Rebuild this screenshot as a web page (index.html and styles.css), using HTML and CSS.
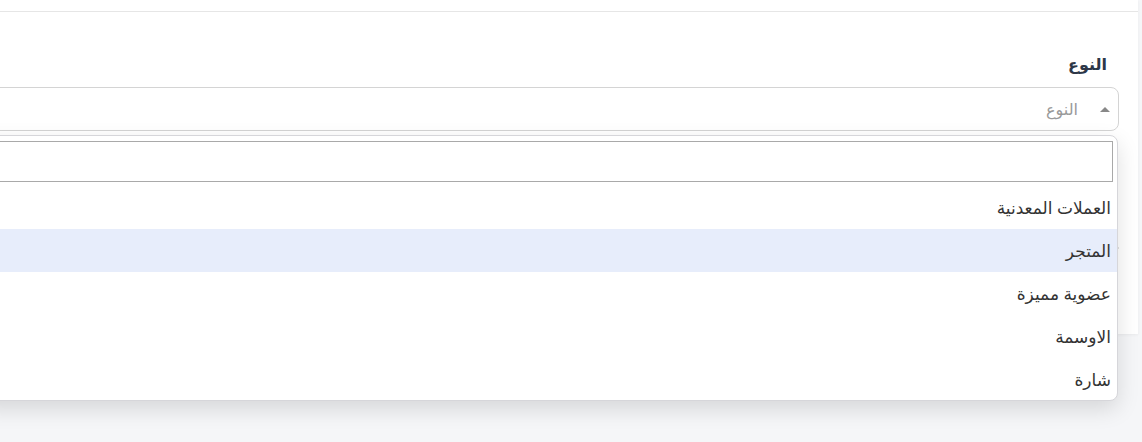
FILE: index.html
```html
<!DOCTYPE html>
<html lang="ar" dir="rtl">
<head>
<meta charset="utf-8">
<title>النوع</title>
<link rel="stylesheet" href="styles.css">
</head>
<body>
<div class="card">
  <div class="card-top"></div>
  <div class="card-body">
    <div class="form-group">
      <label class="field-label">النوع</label>
      <div class="select">
        <span class="select-arrow"></span>
        <span class="select-placeholder">النوع</span>
      </div>
    </div>
    <div class="divider"></div>
  </div>
</div>
<div class="dropdown">
  <div class="dropdown-search">
    <input class="search-input" type="search" aria-label="بحث">
  </div>
  <ul class="options">
    <li class="option">العملات المعدنية</li>
    <li class="option option-active">المتجر</li>
    <li class="option">عضوية مميزة</li>
    <li class="option">الاوسمة</li>
    <li class="option">شارة</li>
  </ul>
</div>
</body>
</html>
```
FILE: styles.css
```css
html, body {
  margin: 0;
  padding: 0;
}
body {
  background: #f5f6f8;
  font-family: "Noto Sans", "DejaVu Sans", sans-serif;
  height: 442px;
  overflow: hidden;
  position: relative;
}
.card {
  margin-right: 4px;
  height: 334px;
  background: #fff;
  box-shadow: 0 1px 3px rgba(0,0,0,0.05);
}
.card-top {
  height: 11px;
  border-bottom: 1px solid #e6e6e6;
}
.card-body {
  padding: 38px 19px 0 0;
}
.form-group {
  display: flex;
  flex-direction: column;
}
.field-label {
  padding-right: 12px;
  font-weight: 700;
  font-size: 16px;
  color: #2d3748;
  line-height: 28px;
  margin-bottom: 9px;
}
.select {
  height: 42px;
  border: 1px solid #d4d4d4;
  border-radius: 8px;
  margin-left: -20px;
  display: flex;
  align-items: center;
  gap: 22px;
  padding-right: 8px;
}
.select-arrow {
  width: 0;
  height: 0;
  border-left: 5px solid transparent;
  border-right: 5px solid transparent;
  border-bottom: 5px solid #888;
}
.select-placeholder {
  color: #999;
  font-size: 16px;
}
.divider {
  margin-top: 116px;
  height: 2px;
  background: #e2e2e2;
}
.dropdown {
  position: absolute;
  top: 135px;
  right: 24px;
  left: -20px;
  height: 264px;
  background: #fff;
  border: 1px solid #d6d6da;
  border-radius: 8px;
  box-shadow: 0 8px 22px rgba(0,0,0,0.13);
}
.dropdown-search {
  padding: 5px 4px 4px 4px;
}
.search-input {
  display: block;
  width: 100%;
  box-sizing: border-box;
  height: 41px;
  border: 1px solid #a9a9a9;
  border-radius: 0;
  margin: 0;
  outline: none;
  font: inherit;
}
.options {
  list-style: none;
  margin: 0;
  padding: 0;
}
.option {
  height: 43px;
  display: flex;
  align-items: center;
  padding-right: 6px;
  font-size: 17px;
  color: #333;
}
.option-active {
  background: #e7edfb;
}
```
